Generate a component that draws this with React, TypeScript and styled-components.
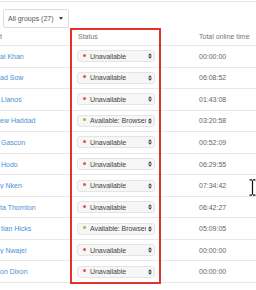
import React from 'react';
import styled, { createGlobalStyle } from 'styled-components';

const Global = createGlobalStyle`
  html, body {
    margin: 0;
    padding: 0;
    background: #fff;
  }
  body {
    font-family: "Liberation Sans", Arial, sans-serif;
    overflow: hidden;
  }
`;

const Page = styled.div`
  position: relative;
  width: 256px;
  height: 290px;
  overflow: hidden;
  border-top: 1px solid #e6e6e6;
  margin-top: 1px;
`;

const Toolbar = styled.div`
  display: flex;
  align-items: center;
  height: 26px;
  padding-left: 3px;
`;

const GroupSelect = styled.div`
  display: flex;
  align-items: center;
  gap: 5px;
  height: 17px;
  padding: 0 5px 0 4px;
  border: 1px solid #dcdcdc;
  border-radius: 2px;
  font-size: 7px;
  color: #555;
  margin-top: 6px;
`;

const Caret = styled.span`
  width: 0;
  height: 0;
  border-left: 2px solid transparent;
  border-right: 2px solid transparent;
  border-top: 3px solid #444;
`;

const Row = styled.div<{ $head?: boolean }>`
  display: grid;
  grid-template-columns: 72px 127px 1fr;
  align-items: center;
  height: ${(p) => (p.$head ? '17px' : '20.55px')};
  border-bottom: 1px solid #e8e8e8;
  font-size: 7px;
  white-space: nowrap;
`;

const HeadCell = styled.div<{ $pad?: number }>`
  color: #777;
  padding-left: ${(p) => p.$pad ?? 0}px;
  overflow: hidden;
`;

const Name = styled.a<{ $shift: number }>`
  color: #4a8fd6;
  text-decoration: none;
  padding-left: ${(p) => p.$shift}px;
  overflow: hidden;
`;

const StatusCell = styled.div`
  padding-left: 5px;
`;

const Select = styled.div`
  position: relative;
  display: flex;
  align-items: center;
  width: 78px;
  height: 12px;
  box-sizing: border-box;
  background: #f6f6f6;
  border: 1px solid #e4e4e4;
  border-radius: 3px;
  padding: 0 0 0 5px;
  overflow: hidden;
  color: #444;
`;

const Dot = styled.span<{ $on: boolean }>`
  flex: none;
  width: 3px;
  height: 3px;
  border-radius: 50%;
  margin-right: 4px;
  margin-top: -2px;
  background: ${(p) => (p.$on ? '#8cc43f' : '#e6535a')};
`;

const Label = styled.span`
  flex: none;
  letter-spacing: -0.05px;
`;

const Arrows = styled.svg`
  position: absolute;
  right: 0;
  top: 0;
  height: 10px;
  width: 8px;
  padding: 1.5px 1.5px 1.5px 1.5px;
  box-sizing: border-box;
  background: #f6f6f6;
`;

const Time = styled.div`
  color: #666;
`;

const Highlight = styled.div`
  position: absolute;
  left: 70px;
  top: 26px;
  width: 91px;
  height: 256px;
  box-sizing: border-box;
  border: 2.5px solid #e4322b;
  pointer-events: none;
`;

const Cursor = styled.svg`
  position: absolute;
  left: 249px;
  top: 177px;
`;

const rows = [
  { name: 'al Khan', shift: 0, on: false, time: '00:00:00' },
  { name: 'ad Sow', shift: 0, on: false, time: '06:08:52' },
  { name: 'Llanos', shift: 1, on: false, time: '01:43:08' },
  { name: 'ew Haddad', shift: 0, on: true, time: '03:20:58' },
  { name: 'Gascon', shift: 1, on: false, time: '00:52:09' },
  { name: 'Hodo', shift: 1, on: false, time: '06:29:55' },
  { name: 'y Nken', shift: 0, on: false, time: '07:34:42' },
  { name: 'ta Thornton', shift: 0, on: false, time: '06:42:27' },
  { name: 'tian Hicks', shift: 1, on: true, time: '05:09:05' },
  { name: 'y Nwajei', shift: 0, on: false, time: '00:00:00' },
  { name: 'on Dixon', shift: 0, on: false, time: '00:00:00' },
];

export default function App() {
  return (
    <Page>
      <Global />
      <Toolbar>
        <GroupSelect>
          All groups (27) <Caret />
        </GroupSelect>
      </Toolbar>
      <Row $head>
        <HeadCell>t</HeadCell>
        <HeadCell $pad={6}>Status</HeadCell>
        <HeadCell>Total online time</HeadCell>
      </Row>
      {rows.map((r) => (
        <Row key={r.name}>
          <Name href="#" $shift={r.shift}>{r.name}</Name>
          <StatusCell>
            <Select>
              <Dot $on={r.on} />
              <Label>{r.on ? 'Available: Browser' : 'Unavailable'}</Label>
              <Arrows viewBox="0 0 5 7">
                <path d="M0.5 3 L2.5 0.8 L4.5 3 Z" fill="#444" />
                <path d="M0.5 4 L2.5 6.2 L4.5 4 Z" fill="#444" />
              </Arrows>
            </Select>
          </StatusCell>
          <Time>{r.time}</Time>
        </Row>
      ))}
      <Highlight />
      <Cursor width="7" height="17" viewBox="0 0 7 17">
        <path d="M0.5 0.8 H3 M4 0.8 H6.5 M3.5 1.2 V15.8 M0.5 16.2 H3 M4 16.2 H6.5" stroke="#111" strokeWidth="1.2" fill="none" />
      </Cursor>
    </Page>
  );
}
